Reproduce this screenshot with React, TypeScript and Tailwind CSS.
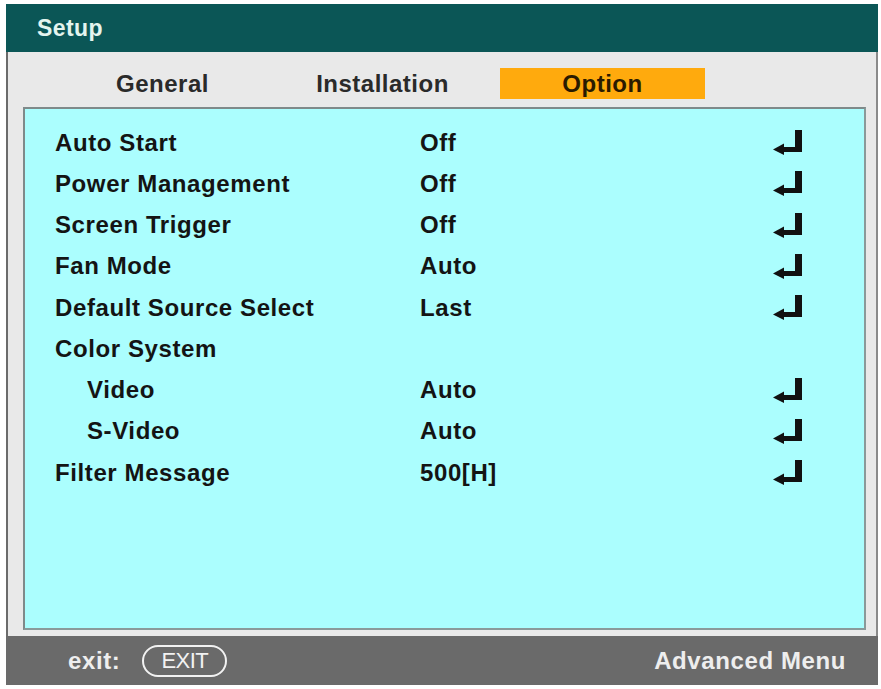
import React from "react";

const font = { fontFamily: '"Liberation Sans", Arial, sans-serif' };

function EnterIcon() {
  return (
    <svg width="29" height="25" viewBox="0 0 29 25" className="block">
      <path d="M22 0 H29 V22 H22 Z" fill="#111" />
      <path d="M9 17 H29 V22 H9 Z" fill="#111" />
      <path d="M0 19.5 L11 13.5 L11 25 Z" fill="#111" />
    </svg>
  );
}

type Row = { label: string; value?: string; indent?: boolean; enter?: boolean };

const rows: Row[] = [
  { label: "Auto Start", value: "Off", enter: true },
  { label: "Power Management", value: "Off", enter: true },
  { label: "Screen Trigger", value: "Off", enter: true },
  { label: "Fan Mode", value: "Auto", enter: true },
  { label: "Default Source Select", value: "Last", enter: true },
  { label: "Color System" },
  { label: "Video", value: "Auto", indent: true, enter: true },
  { label: "S-Video", value: "Auto", indent: true, enter: true },
  { label: "Filter Message", value: "500[H]", enter: true },
];

export default function App() {
  return (
    <div className="w-[881px] h-[689px] bg-white pt-[4px] pl-[6px]" style={font}>
      <div className="w-[872px] h-[681px] flex flex-col">
        <div className="h-[48px] bg-[#0b5656] pl-[31px] flex items-center">
          <span className="text-[23px] font-bold text-[#e4f4ee] tracking-[0.4px] leading-none">Setup</span>
        </div>
        <div className="h-[584px] bg-[#e9e9e9] border-l-2 border-r-2 border-l-[#6b6b6b] border-r-[#8a8a8a] flex flex-col">
          <div className="h-[55px] pt-[16px] pl-[52px] flex gap-[15px]">
            <div className="w-[205px] h-[31px] flex items-center justify-center text-[24px] font-bold text-[#2a2a2a] tracking-[0.5px]">General</div>
            <div className="w-[205px] h-[31px] flex items-center justify-center text-[24px] font-bold text-[#2a2a2a] tracking-[0.5px]">Installation</div>
            <div className="w-[205px] h-[31px] flex items-center justify-center bg-[#ffaa0d] text-[24px] font-bold text-[#2a1a00] tracking-[0.5px]">Option</div>
          </div>
          <div className="h-[523px] ml-[15px] mr-[10px] bg-[#abfefe] border-2 border-t-[#7f8a8a] border-l-[#7f8a8a] border-b-[#8a9a9a] border-r-[#8a9a9a] pt-[13px] pl-[30px]">
            {rows.map((r) => (
              <div key={r.label} className="h-[41.25px] flex items-center text-[24px] font-bold text-[#141414] tracking-[0.6px]">
                <div className={r.indent ? "w-[365px] pl-[32px]" : "w-[365px]"}>{r.label}</div>
                <div className="w-[353px]">{r.value ?? ""}</div>
                <div className="w-[29px]">{r.enter ? <EnterIcon /> : null}</div>
              </div>
            ))}
          </div>
        </div>
        <div className="h-[49px] bg-[#6a6a6a] flex items-center pl-[62px] pr-[32px]">
          <span className="text-[24px] font-bold text-[#eeeeee] tracking-[0.6px]">exit:</span>
          <span className="ml-[22px] w-[85px] h-[32px] rounded-full border-2 border-[#f2f2f2] flex items-center justify-center text-[22px] text-[#f2f2f2] tracking-[-0.5px]">EXIT</span>
          <span className="ml-auto text-[24px] font-bold text-[#eeeeee] tracking-[0.6px]">Advanced Menu</span>
        </div>
      </div>
    </div>
  );
}
